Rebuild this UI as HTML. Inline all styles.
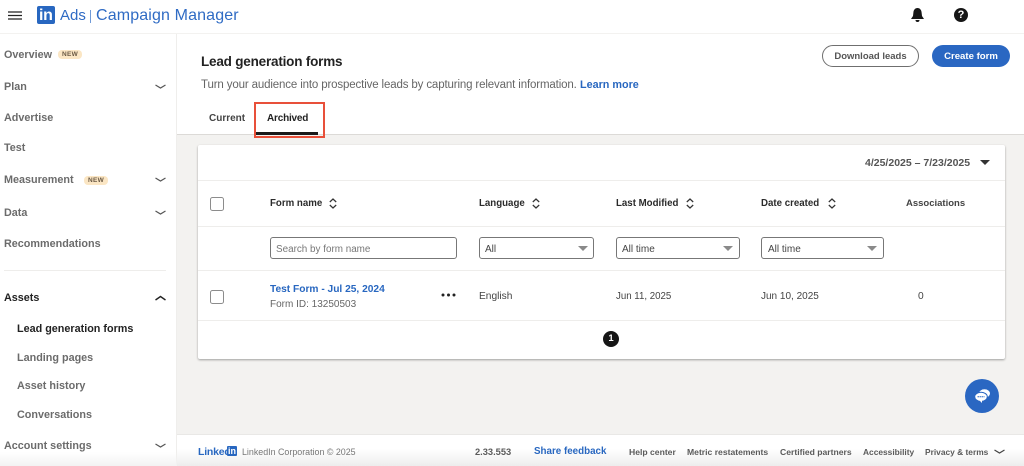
<!DOCTYPE html>
<html><head><meta charset="utf-8"><style>
*{box-sizing:border-box}
html,body{margin:0;padding:0}
body{width:1024px;height:466px;overflow:hidden;position:relative;background:#f3f2f0;font-family:"Liberation Sans",sans-serif;color:#1a1a1a}
.a{position:absolute}
.t{position:absolute;white-space:nowrap;line-height:16px;font-size:11px}
.n{font-size:10.8px;font-weight:bold;color:#6b6b6b}
.h{font-size:9.7px;font-weight:bold;color:#2b2b2b}
.c{font-size:9.7px;color:#444}
.f{font-size:8.6px;font-weight:bold;color:#5a5a5a}
.badge{position:absolute;background:#fbe6c4;color:#6b5a45;font-size:6.5px;font-weight:bold;border-radius:4px;line-height:9px;height:9px;padding:0 4px;letter-spacing:.3px}
.line{position:absolute;background:#eeedeb;height:1px}
.cb{position:absolute;width:14px;height:14px;border:1px solid #8c8c8c;border-radius:2.5px;background:#fff}
.inp{position:absolute;height:22px;top:237px;border:1px solid #777;border-radius:3px;background:#fff}
.tri{position:absolute;width:0;height:0;border-left:5px solid transparent;border-right:5px solid transparent;border-top:5px solid #8a8a8a}
svg{position:absolute;overflow:visible}
</style></head><body>
<div class="a" style="left:0;top:0;width:1024px;height:34px;background:#fff;border-bottom:1px solid #f3f2f0"></div>
<div class="a" style="left:0;top:34px;width:177px;height:432px;background:#fff;border-right:1px solid #efeeec"></div>
<div class="a" style="left:177px;top:34px;width:847px;height:101px;background:#fff;border-bottom:1px solid #dcdad7"></div>

<!-- top bar -->
<svg style="left:8px;top:11px" width="14" height="10"><path d="M0 1h14M0 4.500h14M0 8h14" stroke="#222" stroke-width="1.300"/></svg>
<div class="a" style="left:37px;top:6px;width:18px;height:18px;background:#2867c0;border-radius:2px"></div>
<div class="t" style="left:39px;top:8px;font-size:16px;font-weight:bold;color:#fff;letter-spacing:-.3px">in</div>
<div class="t" style="left:60px;top:8px;font-size:15px;color:#2f6bc4">Ads</div>
<div class="a" style="left:90px;top:10px;width:1px;height:13px;background:#6f9ad8"></div>
<div class="t" style="left:96px;top:8px;font-size:16px;color:#2f6bc4;letter-spacing:.14px">Campaign Manager</div>
<svg style="left:910px;top:7px" width="15" height="16" viewBox="0 0 15 16"><path d="M7.500 1C5 1 3.600 3 3.400 5.500L3 9 1 12h13l-2-3-.4-3.500C11.400 3 10 1 7.500 1zM5.500 13a2 2 0 004 0z" fill="#161616"/></svg>
<div class="a" style="left:954px;top:8px;width:14px;height:14px;border-radius:50%;background:#161616;color:#fff;font-size:11px;font-weight:bold;line-height:14px;text-align:center">?</div>

<!-- sidebar -->
<div class="t n" style="left:4px;top:47px">Overview</div><div class="badge" style="left:58px;top:50px">NEW</div>
<div class="t n" style="left:4px;top:79px">Plan</div>
<div class="t n" style="left:4px;top:110px">Advertise</div>
<div class="t n" style="left:4px;top:140px">Test</div>
<div class="t n" style="left:4px;top:172px">Measurement</div><div class="badge" style="left:84px;top:176px">NEW</div>
<div class="t n" style="left:4px;top:205px">Data</div>
<div class="t n" style="left:4px;top:236px">Recommendations</div>
<div class="line" style="left:4px;top:270px;width:162px"></div>
<div class="t n" style="left:4px;top:290px;color:#222">Assets</div>
<div class="t n" style="left:17px;top:321px;color:#222">Lead generation forms</div>
<div class="t n" style="left:17px;top:350px">Landing pages</div>
<div class="t n" style="left:17px;top:378px">Asset history</div>
<div class="t n" style="left:17px;top:407px">Conversations</div>
<div class="t n" style="left:4px;top:438px">Account settings</div>
<svg style="left:155px;top:84px" width="11" height="6"><path d="M.5 1L5.500 4 10.500 1" fill="none" stroke="#555" stroke-width="1.200"/></svg>
<svg style="left:155px;top:177px" width="11" height="6"><path d="M.5 1L5.500 4 10.500 1" fill="none" stroke="#555" stroke-width="1.200"/></svg>
<svg style="left:155px;top:210px" width="11" height="6"><path d="M.5 1L5.500 4 10.500 1" fill="none" stroke="#555" stroke-width="1.200"/></svg>
<svg style="left:155px;top:295px" width="11" height="6"><path d="M.5 5L5.500 1.500 10.500 5" fill="none" stroke="#222" stroke-width="1.400"/></svg>
<svg style="left:155px;top:443px" width="11" height="6"><path d="M.5 1L5.500 4 10.500 1" fill="none" stroke="#555" stroke-width="1.200"/></svg>

<!-- page header -->
<div class="t" style="left:201px;top:54px;font-size:13.500px;font-weight:bold;color:#222;letter-spacing:-.2px">Lead generation forms</div>
<div class="t" style="left:201px;top:77px;font-size:11.500px;color:#666;letter-spacing:-.14px">Turn your audience into prospective leads by capturing relevant information.</div>
<div class="t" style="left:580px;top:77px;font-size:10.800px;font-weight:bold;color:#2867c0">Learn more</div>
<div class="a" style="left:822px;top:45px;width:97px;height:22px;border:1px solid #6f6f6f;border-radius:11px;background:#fff;color:#555;font-size:9.500px;font-weight:bold;line-height:21px;text-align:center">Download leads</div>
<div class="a" style="left:932px;top:45px;width:78px;height:22px;border-radius:11px;background:#2a67c2;color:#fff;font-size:9.600px;font-weight:bold;line-height:23px;text-align:center">Create form</div>
<div class="t" style="left:209px;top:111px;font-size:10px;font-weight:bold;color:#444">Current</div>
<div class="t" style="left:267px;top:111px;font-size:10px;font-weight:bold;color:#222;letter-spacing:-.2px">Archived</div>
<div class="a" style="left:256px;top:132px;width:62px;height:3px;background:#1a1a1a"></div>
<div class="a" style="left:254px;top:102px;width:71px;height:36px;border:2px solid #e8503a"></div>

<!-- card -->
<div class="a" style="left:198px;top:145px;width:807px;height:214px;background:#fff;border-radius:2px;box-shadow:0 1px 2px rgba(0,0,0,.35)"></div>
<div class="line" style="left:198px;top:180px;width:807px"></div>
<div class="line" style="left:198px;top:226px;width:807px"></div>
<div class="line" style="left:198px;top:270px;width:807px"></div>
<div class="line" style="left:198px;top:320px;width:807px"></div>
<div class="t" style="left:865px;top:155px;font-size:10.500px;font-weight:bold;color:#555">4/25/2025 – 7/23/2025</div>
<div class="tri" style="left:980px;top:160px;border-top-color:#333"></div>

<div class="cb" style="left:210px;top:197px"></div>
<div class="t h" style="left:270px;top:196px">Form name</div>
<div class="t h" style="left:479px;top:196px">Language</div>
<div class="t h" style="left:616px;top:196px">Last Modified</div>
<div class="t h" style="left:761px;top:196px">Date created</div>
<div class="t h" style="left:906px;top:196px;color:#444;font-size:9.500px">Associations</div>
<svg style="left:329px;top:198px" width="8" height="11"><path d="M.8 4L4 1l3.200 3M.8 7L4 10l3.200-3" fill="none" stroke="#333" stroke-width="1.200"/></svg>
<svg style="left:532px;top:198px" width="8" height="11"><path d="M.8 4L4 1l3.200 3M.8 7L4 10l3.200-3" fill="none" stroke="#333" stroke-width="1.200"/></svg>
<svg style="left:686px;top:198px" width="8" height="11"><path d="M.8 4L4 1l3.200 3M.8 7L4 10l3.200-3" fill="none" stroke="#333" stroke-width="1.200"/></svg>
<svg style="left:828px;top:198px" width="8" height="11"><path d="M.8 4L4 1l3.200 3M.8 7L4 10l3.200-3" fill="none" stroke="#333" stroke-width="1.200"/></svg>

<div class="inp" style="left:270px;width:187px"></div>
<div class="t" style="left:276px;top:242px;font-size:9.900px;color:#777">Search by form name</div>
<div class="inp" style="left:479px;width:115px"></div>
<div class="t" style="left:485px;top:242px;font-size:10px;color:#444">All</div>
<div class="tri" style="left:578px;top:246px"></div>
<div class="inp" style="left:616px;width:124px"></div>
<div class="t" style="left:622px;top:242px;font-size:10px;color:#444">All time</div>
<div class="tri" style="left:723px;top:246px"></div>
<div class="inp" style="left:761px;width:123px"></div>
<div class="t" style="left:768px;top:242px;font-size:10px;color:#444">All time</div>
<div class="tri" style="left:867px;top:246px"></div>

<div class="cb" style="left:210px;top:290px"></div>
<div class="t" style="left:270px;top:282px;font-size:10.200px;font-weight:bold;color:#2867c0">Test Form - Jul 25, 2024</div>
<div class="t" style="left:270px;top:297px;font-size:10px;color:#666">Form ID: 13250503</div>
<svg style="left:441px;top:293px" width="15" height="4"><circle cx="2" cy="2" r="1.500" fill="#222"/><circle cx="7.500" cy="2" r="1.500" fill="#222"/><circle cx="13" cy="2" r="1.500" fill="#222"/></svg>
<div class="t c" style="left:479px;top:289px;font-size:10.200px">English</div>
<div class="t c" style="left:616px;top:289px">Jun 11, 2025</div>
<div class="t c" style="left:761px;top:289px;font-size:10px">Jun 10, 2025</div>
<div class="t c" style="left:918px;top:289px;font-size:10.200px">0</div>
<div class="a" style="left:603px;top:331px;width:16px;height:16px;border-radius:50%;background:#161616;color:#fff;font-size:9.500px;font-weight:bold;line-height:16px;text-align:center">1</div>

<!-- chat -->
<div class="a" style="left:965px;top:379px;width:34px;height:34px;border-radius:50%;background:#2a67c2"></div>
<svg style="left:974px;top:388px" width="17" height="17" viewBox="0 0 17 17"><ellipse cx="10.500" cy="5.500" rx="5.500" ry="4.200" fill="#fff"/><ellipse cx="7" cy="8.800" rx="6.300" ry="4.600" fill="#fff" stroke="#2a67c2" stroke-width="1"/><path d="M5.500 12.500l2.500 2.500v-2.500z" fill="#fff"/><path d="M3.500 8.800h7" stroke="#2a67c2" stroke-width="1" stroke-dasharray="1.500 .5"/></svg>

<!-- footer -->
<div class="a" style="left:177px;top:434px;width:847px;height:32px;background:linear-gradient(#fff 45%,#ededed 100%);border-top:1px solid #e9e8e6"></div>
<div class="a" style="left:0;top:452px;width:177px;height:14px;background:linear-gradient(rgba(255,255,255,0),#f3f3f3)"></div>
<div class="t" style="left:198px;top:444px;font-size:10.500px;font-weight:bold;color:#2867c0;letter-spacing:-.2px">Linked</div>
<div class="a" style="left:227px;top:446px;width:10px;height:10px;background:#2867c0;border-radius:1px;color:#fff;font-size:9px;font-weight:bold;line-height:11px;text-align:center">in</div>
<div class="t" style="left:242px;top:444px;font-size:8.900px;color:#777">LinkedIn Corporation © 2025</div>
<div class="t f" style="left:475px;top:444px;font-size:9.300px">2.33.553</div>
<div class="t" style="left:534px;top:444px;font-size:9.800px;font-weight:bold;color:#2867c0">Share feedback</div>
<div class="t f" style="left:629px;top:444px">Help center</div>
<div class="t f" style="left:687px;top:444px">Metric restatements</div>
<div class="t f" style="left:780px;top:444px">Certified partners</div>
<div class="t f" style="left:863px;top:444px;font-size:8.400px">Accessibility</div>
<div class="t f" style="left:925px;top:444px;font-size:8.400px">Privacy &amp; terms</div>
<svg style="left:994px;top:449px" width="11" height="6"><path d="M.5 1L5.500 4 10.500 1" fill="none" stroke="#444" stroke-width="1.200"/></svg>
</body></html>
